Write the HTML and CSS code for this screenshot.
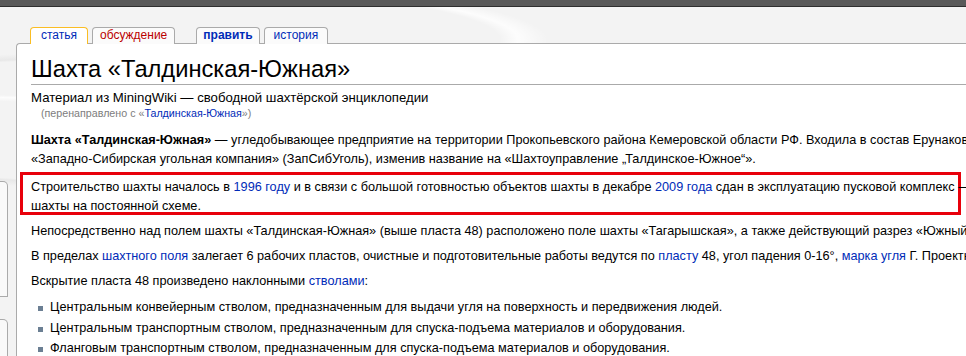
FILE: index.html
```html
<!DOCTYPE html>
<html lang="ru">
<head>
  <meta charset="UTF-8" />
  <title>Шахта «Талдинская-Южная» — MiningWiki</title>
  <link rel="stylesheet" href="styles.css">
</head>
<body>
  <div class="topbar"></div>
  <div class="page">
    <div class="sidebar">
      <div class="portlet portlet-nav"></div>
      <div class="portlet portlet-search"></div>
    </div>
    <div class="main">
      <ul class="tabs">
        <li class="tab selected"><a href="#">статья</a></li>
        <li class="tab talk"><a href="#" class="new">обсуждение</a></li>
        <li class="tab edit"><a href="#">править</a></li>
        <li class="tab"><a href="#">история</a></li>
      </ul>
      <div class="content">
        <h1 class="title">Шахта «Талдинская-Южная»</h1>
        <div class="site-sub">Материал из MiningWiki — свободной шахтёрской энциклопедии</div>
        <div class="redirect">(перенаправлено с «<a href="#">Талдинская-Южная</a>»)</div>
        <div class="article">
          <p><b>Шахта «Талдинская-Южная»</b> — угледобывающее предприятие на территории Прокопьевского района Кемеровской области РФ. Входила в состав Ерунаковского угольного района, принадлежала ОАО<br>«Западно-Сибирская угольная компания» (ЗапСибУголь), изменив название на «Шахтоуправление „Талдинское-Южное“».</p>
          <div class="highlight">
            <p>Строительство шахты началось в <a href="#">1996 году</a> и в связи с большой готовностью объектов шахты в декабре <a href="#">2009 года</a> сдан в эксплуатацию пусковой комплекс — до ввода в работу<br>шахты на постоянной схеме.</p>
          </div>
          <p>Непосредственно над полем шахты «Талдинская-Южная» (выше пласта 48) расположено поле шахты «Тагарышская», а также действующий разрез «Южный».</p>
          <p>В пределах <a href="#">шахтного поля</a> залегает 6 рабочих пластов, очистные и подготовительные работы ведутся по <a href="#">пласту</a> 48, угол падения 0-16°, <a href="#">марка угля</a> Г. Проектная мощность шахты.</p>
          <p>Вскрытие пласта 48 произведено наклонными <a href="#">стволами</a>:</p>
          <ul class="bullets">
            <li>Центральным конвейерным стволом, предназначенным для выдачи угля на поверхность и передвижения людей.</li>
            <li>Центральным транспортным стволом, предназначенным для спуска-подъема материалов и оборудования.</li>
            <li>Фланговым транспортным стволом, предназначенным для спуска-подъема материалов и оборудования.</li>
          </ul>
        </div>
      </div>
    </div>
  </div>
</body>
</html>
```

FILE: styles.css
```css
* {
  box-sizing: border-box;
}
html, body {
  overflow: hidden;
}
body {
  margin: 0;
  font-family: 'Liberation Sans', Arial, sans-serif;
  color: #000;
  background-color: #f3f3f3;
  background-image:
    radial-gradient(ellipse 900px 120px at 700px 150px, transparent 60%, rgba(255,255,255,0.7) 62%, transparent 66%),
    radial-gradient(ellipse 700px 90px at 200px 120px, transparent 70%, rgba(225,225,225,0.6) 72%, transparent 78%),
    radial-gradient(ellipse 600px 80px at 80px 40px, transparent 70%, rgba(255,255,255,0.8) 73%, transparent 78%);
  background-repeat: no-repeat;
}
a {
  color: #002bb8;
  text-decoration: none;
}
.topbar {
  height: 7px;
  background: #595959;
  border-bottom: 1px solid #2e2e2e;
}
.page {
  display: flex;
  align-items: flex-start;
}
.sidebar {
  flex: none;
  width: 16px;
  padding-top: 174px;
}
.portlet {
  width: 8px;
  background: #f9f9f9;
  border: 1px solid #aaa;
  border-left: none;
  border-top-right-radius: 5px;
}
.portlet-nav {
  height: 116px;
  margin-bottom: 22px;
}
.portlet-search {
  height: 60px;
}
.main {
  flex: none;
  width: 1300px;
}
.tabs {
  list-style: none;
  margin: 0;
  padding: 20px 0 0 14px;
  display: flex;
  align-items: flex-end;
  gap: 4px;
}
.tab {
  height: 17px;
  margin-bottom: -1px;
  background: #fbfbfb;
  border: 1px solid #aaa;
  border-bottom: none;
  border-radius: 4px 4px 0 0;
  font-size: 12px;
  line-height: 15px;
}
.tab a {
  display: block;
  padding: 0 9px;
  color: #002bb8;
}
.tab a.new {
  color: #ba0000;
}
.tab.selected {
  position: relative;
  z-index: 1;
  background: #fff;
  border-color: #fabd23;
}
.tab.selected a {
  padding: 0 10px;
}
.tab.talk a {
  padding: 0 7px;
}
.tab.edit {
  margin-left: 17px;
}
.tab.edit a {
  padding: 0 6px;
  font-weight: bold;
}
.content {
  background: #fff;
  border: 1px solid #aaa;
  border-right: none;
  border-top-left-radius: 4px;
  padding: 0 0 40px 14px;
  font-size: 12.7px;
  line-height: 19px;
}
.title {
  margin: 0;
  padding-top: 11px;
  font-size: 23.7px;
  font-weight: normal;
  line-height: 29px;
  border-bottom: 1px solid #aaa;
}
.site-sub {
  margin-top: 5px;
  font-size: 13.2px;
  line-height: 16px;
}
.redirect {
  margin-left: 10px;
  font-size: 10.7px;
  line-height: 14px;
  color: #7d7d7d;
}
.article {
  margin-top: 11px;
}
.article p {
  margin: 5px 0 6px;
  white-space: nowrap;
}
.highlight {
  width: 941px;
  height: 43px;
  margin: -3px 0 7px -11px;
  padding-left: 8px;
  border: 3px solid #e8000b;
}
.highlight p {
  margin: 3px 0 0;
}
.bullets {
  list-style: none;
  margin: 7px 0 0;
  padding: 0 0 0 19px;
}
.bullets li {
  position: relative;
  margin-bottom: 1.5px;
  white-space: nowrap;
}
.bullets li::before {
  content: "";
  position: absolute;
  left: -12px;
  top: 8px;
  width: 5px;
  height: 5px;
  background: #6b7f93;
}
```
